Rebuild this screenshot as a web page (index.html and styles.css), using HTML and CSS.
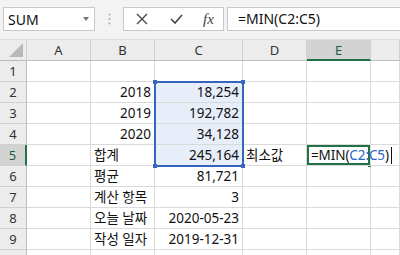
FILE: index.html
```html
<!DOCTYPE html>
<html lang="ko">
  <head>
    <meta charset="UTF-8" />
    <title>MIN 함수</title>
    <link rel="stylesheet" href="styles.css">
  </head>
  <body>
    <div class="bar">
      <div class="namebox">
        <span>SUM</span>
        <svg class="arrow" width="6" height="4" viewBox="0 0 6 4"><path d="M0 0h6L3 4z" fill="#777"/></svg>
      </div>
      <div class="grip">
        <svg width="3" height="12" viewBox="0 0 3 12"><circle cx="1.5" cy="1.5" r="1" fill="#aaa"/><circle cx="1.5" cy="6" r="1" fill="#aaa"/><circle cx="1.5" cy="10.5" r="1" fill="#aaa"/></svg>
      </div>
      <div class="btns">
        <svg width="12" height="12" viewBox="0 0 12 12"><path d="M1 1L11 11M11 1L1 11" stroke="#444" stroke-width="1.3"/></svg>
        <svg width="13" height="10" viewBox="0 0 13 10"><path d="M1 5l4 4 7-8" stroke="#444" stroke-width="1.6" fill="none"/></svg>
        <span class="fx">fx</span>
      </div>
      <div class="formula">=MIN(C2:C5)</div>
    </div>

    <div class="sheet">
      <div class="hd corner"></div>
      <div class="hd">A</div>
      <div class="hd">B</div>
      <div class="hd">C</div>
      <div class="hd">D</div>
      <div class="hd on-col">E</div>
      <div class="hd"></div>

      <div class="rh">1</div>
      <div class="c"></div><div class="c"></div><div class="c"></div><div class="c"></div><div class="c"></div><div class="c"></div>

      <div class="rh">2</div>
      <div class="c"></div><div class="c num">2018</div><div class="c num hl">18,254</div><div class="c"></div><div class="c"></div><div class="c"></div>

      <div class="rh">3</div>
      <div class="c"></div><div class="c num">2019</div><div class="c num hl">192,782</div><div class="c"></div><div class="c"></div><div class="c"></div>

      <div class="rh">4</div>
      <div class="c"></div><div class="c num">2020</div><div class="c num hl">34,128</div><div class="c"></div><div class="c"></div><div class="c"></div>

      <div class="rh on-row">5</div>
      <div class="c"></div><div class="c">합계</div><div class="c num hl">245,164</div><div class="c">최소값</div>
      <div class="c edit">=MIN(<span class="ref">C2:C5</span>)<span class="caret"></span></div>
      <div class="c"></div>

      <div class="rh">6</div>
      <div class="c"></div><div class="c">평균</div><div class="c num">81,721</div><div class="c"></div><div class="c"></div><div class="c"></div>

      <div class="rh">7</div>
      <div class="c"></div><div class="c">계산 항목</div><div class="c num">3</div><div class="c"></div><div class="c"></div><div class="c"></div>

      <div class="rh">8</div>
      <div class="c"></div><div class="c">오늘 날짜</div><div class="c num">2020-05-23</div><div class="c"></div><div class="c"></div><div class="c"></div>

      <div class="rh">9</div>
      <div class="c"></div><div class="c">작성 일자</div><div class="c num">2019-12-31</div><div class="c"></div><div class="c"></div><div class="c"></div>

      <div class="rh"></div>
      <div class="c"></div><div class="c"></div><div class="c"></div><div class="c"></div><div class="c"></div><div class="c"></div>

      <!-- reference range C2:C5 -->
      <div class="range">
        <i class="h tl"></i><i class="h tr"></i><i class="h bl"></i><i class="h br"></i>
      </div>
      <div class="fill-handle"></div>
    </div>
  </body>
</html>
```

FILE: styles.css
```css
body {
  margin: 0;
  width: 400px;
  height: 255px;
  overflow: hidden;
  background-color: #ffffff;
  font-family: "Noto Sans", "Noto Sans CJK KR", sans-serif;
  color: #111;
}

.bar {
  display: flex;
  align-items: flex-start;
  height: 40px;
  padding: 7px 0 0 3px;
  box-sizing: border-box;
  background-color: #f3f3f3;
  border-bottom: 1px solid #dcdcdc;
}

.namebox {
  width: 92px;
  height: 24px;
  box-sizing: border-box;
  background: #fff;
  border: 1px solid #c8c8c8;
  display: flex;
  align-items: center;
  justify-content: space-between;
  padding: 0 5px 0 4px;
  font-size: 14px;
}

.grip {
  width: 28px;
  height: 24px;
  display: flex;
  align-items: center;
  justify-content: center;
}

.btns {
  width: 101px;
  height: 24px;
  box-sizing: border-box;
  background: #fff;
  border: 1px solid #c8c8c8;
  display: flex;
  align-items: center;
  padding-left: 12px;
  gap: 22px;
}

.fx {
  font-family: "Liberation Serif", serif;
  font-style: italic;
  font-size: 15px;
  color: #444;
  margin-left: -2px;
}

.formula {
  flex: 1;
  height: 24px;
  margin-left: 3px;
  box-sizing: border-box;
  background: #fff;
  border: 1px solid #c8c8c8;
  border-right: none;
  padding-left: 10px;
  font-size: 14px;
  line-height: 22px;
}

.sheet {
  position: relative;
  display: grid;
  grid-template-columns: 27px 64px 64px 88px 64px 64px 1fr;
  grid-template-rows: 21px repeat(9, 21px) 21px;
  font-size: 13.5px;
}

.hd {
  background-color: #ececec;
  border-right: 1px solid #d0d0d0;
  border-bottom: 1px solid #bdbdbd;
  box-sizing: border-box;
  text-align: center;
  line-height: 20px;
  font-size: 13px;
  color: #333;
}

.corner {
  position: relative;
}

.corner::after {
  content: "";
  position: absolute;
  right: 3px;
  bottom: 3px;
  border-left: 14px solid transparent;
  border-bottom: 14px solid #b9b9b9;
}

.hd.on-col {
  background-color: #d3d3d3;
  border-bottom: 2px solid #217346;
  color: #1e5c3a;
}

.rh {
  background-color: #ececec;
  border-right: 1px solid #bdbdbd;
  border-bottom: 1px solid #d0d0d0;
  box-sizing: border-box;
  text-align: center;
  line-height: 21px;
  font-size: 13px;
  color: #333;
}

.rh.on-row {
  background-color: #d3d3d3;
  border-right: 2px solid #217346;
  color: #1e5c3a;
}

.c {
  border-right: 1px solid #dadada;
  border-bottom: 1px solid #dadada;
  box-sizing: border-box;
  padding: 0 3px;
  line-height: 21px;
  white-space: nowrap;
}

.num {
  text-align: right;
}

.hl {
  background-color: #e8eef9;
}

.edit {
  position: relative;
  z-index: 2;
  overflow: visible;
  box-shadow: inset 0 0 0 2px #217346;
  padding-left: 4px;
  letter-spacing: -0.1px;
}

.ref {
  color: #2a62c8;
}

.caret {
  display: inline-block;
  width: 1px;
  height: 17px;
  margin-left: 2px;
  background: #111;
  vertical-align: -4px;
}

.range {
  position: absolute;
  left: 154px;
  top: 41px;
  width: 90px;
  height: 86px;
  box-sizing: border-box;
  border: 2px solid #3466bd;
  pointer-events: none;
}

.range .h {
  position: absolute;
  width: 4px;
  height: 4px;
  background: #3466bd;
}

.range .tl { left: -3px; top: -3px; }
.range .tr { right: -3px; top: -3px; }
.range .bl { left: -3px; bottom: -3px; }
.range .br { right: -3px; bottom: -3px; }

.fill-handle {
  position: absolute;
  left: 368px;
  top: 124px;
  width: 3px;
  height: 3px;
  background: #217346;
  z-index: 1;
}
```
